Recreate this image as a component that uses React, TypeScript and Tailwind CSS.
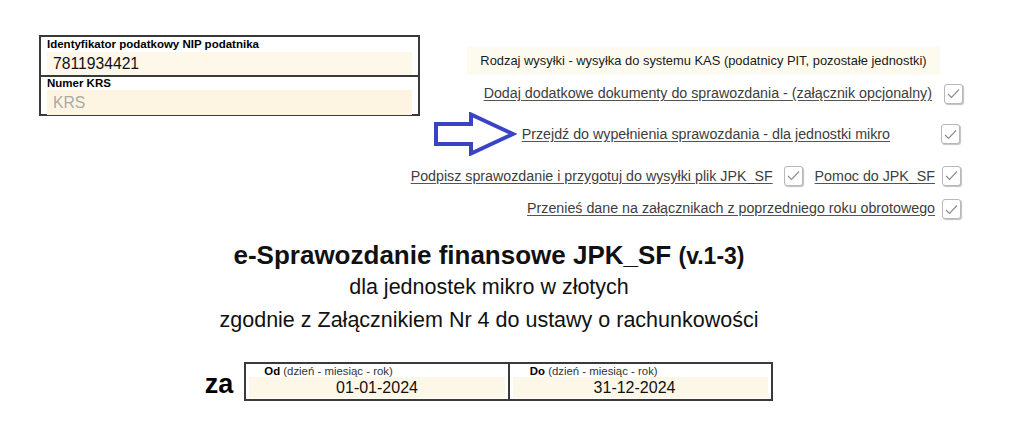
import React from "react";

function Check() {
  return (
    <span className="inline-flex items-center justify-center w-[19px] h-[20px] border border-[#b8b8b8] rounded-[3px] bg-white shadow-[1px_1px_1px_rgba(0,0,0,0.25)] shrink-0">
      <svg width="13" height="11" viewBox="0 0 13 11" fill="none">
        <polyline points="1,6 4.5,9.5 12,1.5" stroke="#8a8a8a" strokeWidth="1.1" />
      </svg>
    </span>
  );
}

function Arrow() {
  return (
    <svg width="84" height="44" viewBox="0 0 84 44" fill="none" className="shrink-0">
      <polygon
        points="3,12 38,12 38,2.5 80,22 38,41.5 38,32 3,32"
        stroke="#3a43c4"
        strokeWidth="4"
        strokeLinejoin="miter"
        fill="white"
      />
    </svg>
  );
}

function LinkText({ children }: { children: React.ReactNode }) {
  return <span className="text-[14.25px] text-[#3d3d3d] underline underline-offset-2 decoration-[#555] whitespace-nowrap">{children}</span>;
}

export default function App() {
  return (
    <div className="w-[1013px] h-[424px] bg-white overflow-hidden font-['Liberation_Sans',Arial,sans-serif] text-black">
      <div className="flex pt-[35px] pl-[39px] pr-[50px]">
        {/* NIP / KRS box */}
        <div className="w-[381px] h-[81px] border-2 border-[#3a3a3a] flex flex-col shrink-0">
          <div className="h-[41px] border-b-2 border-[#3a3a3a] px-[6px] pt-[1px]">
            <div className="text-[11.5px] font-bold leading-[13px]">Identyfikator podatkowy NIP podatnika</div>
            <div className="mt-[1px] bg-[#fdf8ea] h-[23px] pl-[6px] text-[15.7px] leading-[23px] text-[#111]">7811934421</div>
          </div>
          <div className="flex-1 px-[6px]">
            <div className="text-[11.5px] font-bold leading-[13px]">Numer KRS</div>
            <div className="bg-[#fdf5e2] h-[25px] pl-[6px] text-[15.7px] leading-[25px] text-[#a9a9a9]">KRS</div>
          </div>
        </div>

        {/* right column */}
        <div className="flex-1 min-w-0 flex flex-col items-end pt-[12px]">
          <div className="mr-[23px] w-[473px] h-[28px] shrink-0 bg-[#fdfaf0] flex items-center justify-center text-[12.9px] text-[#1a1a1a] whitespace-nowrap">
            Rodzaj wysyłki - wysyłka do systemu KAS (podatnicy PIT, pozostałe jednostki)
          </div>
          <div className="mt-[8px] flex items-center gap-[12px]">
            <LinkText>Dodaj dodatkowe dokumenty do sprawozdania - (załącznik opcjonalny)</LinkText>
            <Check />
          </div>
          <div className="mt-[8px] flex items-center mr-[3px]">
            <Arrow />
            <span className="ml-[5px] mr-[51px]">
              <LinkText>Przejdź do wypełnienia sprawozdania - dla jednostki mikro</LinkText>
            </span>
            <Check />
          </div>
          <div className="mt-[8px] flex items-center mr-[2px]">
            <LinkText>Podpisz sprawozdanie i przygotuj do wysyłki plik JPK_SF</LinkText>
            <span className="ml-[11px] mr-[12px]"><Check /></span>
            <LinkText>Pomoc do JPK_SF</LinkText>
            <span className="ml-[7px]"><Check /></span>
          </div>
          <div className="mt-[10px] flex items-center gap-[7px] mr-[2px]">
            <LinkText>Przenieś dane na załącznikach z poprzedniego roku obrotowego</LinkText>
            <Check />
          </div>
        </div>
      </div>

      {/* title block */}
      <div className="w-[978px] mt-[20px] flex flex-col items-center text-center">
        <div className="text-[26px] font-bold leading-[30px] text-[#111] whitespace-nowrap">
          e-Sprawozdanie finansowe JPK_SF <span className="text-[23px]">(v.1-3)</span>
        </div>
        <div className="text-[21.5px] leading-[32px] text-[#111]">dla jednostek mikro w złotych</div>
        <div className="text-[21.5px] leading-[34px] text-[#111] whitespace-nowrap">zgodnie z Załącznikiem Nr 4 do ustawy o rachunkowości</div>

        <div className="mt-[25px] flex items-center">
          <span className="text-[27px] font-bold leading-none mr-[11px] mt-[6px]">za</span>
          <div className="w-[529px] h-[39px] border-2 border-[#3a3a3a] flex">
            <div className="flex-1 border-r-2 border-[#3a3a3a] px-[3px] text-left">
              <div className="text-[11.4px] leading-[12px] pl-[15px] pt-[1px]">
                <span className="font-bold">Od</span> <span className="text-[#333]">(dzień - miesiąc - rok)</span>
              </div>
              <div className="bg-[#fdf7e7] h-[21px] text-[16px] leading-[21px] text-center text-[#111]">01-01-2024</div>
            </div>
            <div className="flex-1 px-[3px] text-left">
              <div className="text-[11.4px] leading-[12px] pl-[17px] pt-[1px]">
                <span className="font-bold">Do</span> <span className="text-[#333]">(dzień - miesiąc - rok)</span>
              </div>
              <div className="bg-[#fdf7e7] h-[21px] text-[16px] leading-[21px] text-center text-[#111] pr-[12px]">31-12-2024</div>
            </div>
          </div>
        </div>
      </div>
    </div>
  );
}
